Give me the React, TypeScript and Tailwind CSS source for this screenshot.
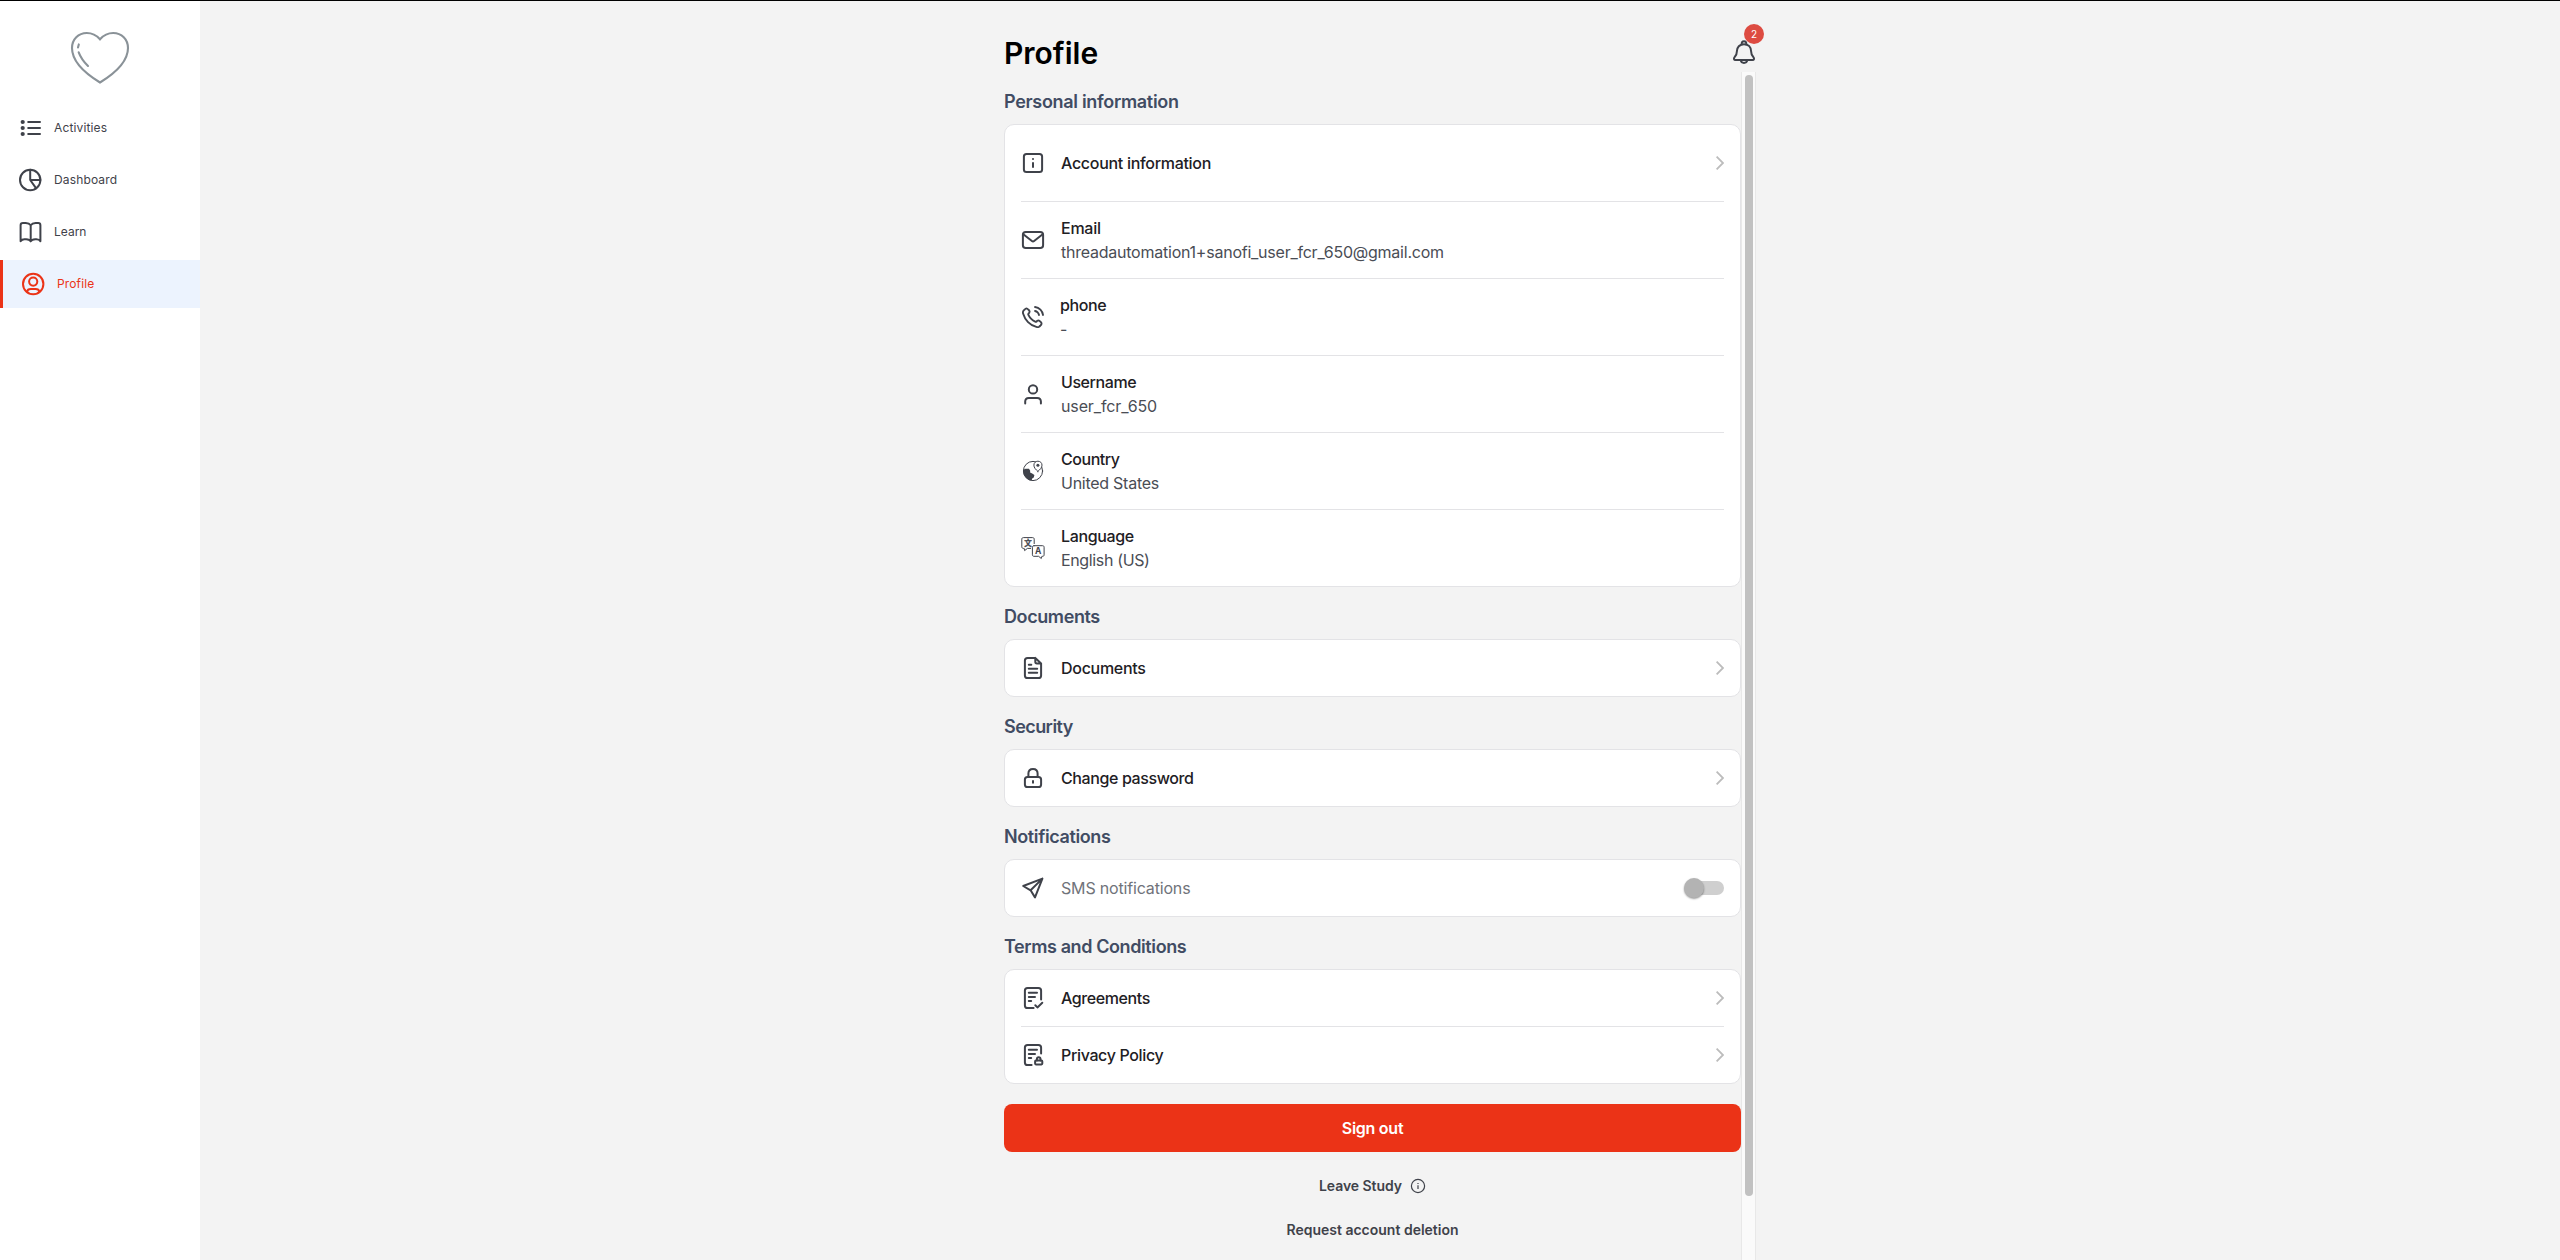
import React from 'react';

type IconProps = { children: React.ReactNode; width?: number };

function Icon({ children, width = 2 }: IconProps) {
  return (
    <svg
      viewBox="0 0 24 24"
      className="size-6 shrink-0"
      fill="none"
      stroke="currentColor"
      strokeWidth={width}
      strokeLinecap="round"
      strokeLinejoin="round"
    >
      {children}
    </svg>
  );
}

const ListIcon = () => (
  <Icon>
    <path d="M10.2 6H22M10.2 12H22M10.2 18H22" />
    <g fill="currentColor" stroke="none">
      <circle cx="4.7" cy="6" r="2.1" />
      <circle cx="4.7" cy="12" r="2.1" />
      <circle cx="4.7" cy="18" r="2.1" />
    </g>
  </Icon>
);

const PieIcon = () => (
  <Icon>
    <circle cx="12.2" cy="12" r="10.2" />
    <path d="M12.2 1.8V12L18 20.2M12.2 12H22.4" />
  </Icon>
);

const BookIcon = () => (
  <Icon>
    <path d="M12.7 5.2C11.6 3.6 10 3 7.8 3H5C3.4 3 2.6 3.8 2.6 5.2V21.2C3.5 19.8 4.6 19.2 6.4 19.2H8.2C10.4 19.2 11.9 19.8 12.7 21.4C13.5 19.8 15 19.2 17.2 19.2H18.4C20.2 19.2 21.6 19.8 22.4 21.2V5.2C22.4 3.8 21.8 3 20.2 3H17.6C15.4 3 13.8 3.6 12.7 5.2V21.2" />
  </Icon>
);

const AvatarIcon = () => (
  <Icon>
    <circle cx="12.2" cy="12" r="10.2" />
    <circle cx="12.2" cy="9.6" r="4.1" />
    <path d="M6 19.8C6.4 17.9 7.7 17.1 9.8 17.1H14.6C16.7 17.1 18 17.9 18.4 19.8" />
  </Icon>
);

const InfoSquareIcon = () => (
  <Icon>
    <rect x="2.9" y="2.9" width="18.2" height="18.2" rx="2.6" />
    <path d="M12 11.2V16.8M12 7.2V8.8" strokeLinecap="butt" />
  </Icon>
);

const MailIcon = () => (
  <Icon>
    <rect x="1.9" y="3.9" width="20.2" height="16.2" rx="2.8" />
    <path d="M2.3 6.2L10.9 13C11.6 13.6 12.4 13.6 13.1 13L21.7 6.2" />
  </Icon>
);

const PhoneIcon = () => (
  <Icon width={1.9}>
    <path d="M14.05 6C15.03 6.19 15.92 6.67 16.63 7.37C17.33 8.08 17.81 8.97 18 9.95M14.05 2C16.08 2.23 17.97 3.13 19.42 4.58C20.86 6.02 21.77 7.91 22 9.94M10.23 13.86C9.03 12.66 8.08 11.3 7.38 9.85C7.32 9.73 7.29 9.67 7.27 9.59C7.19 9.31 7.24 8.96 7.41 8.73C7.46 8.66 7.52 8.6 7.63 8.49C7.98 8.14 8.16 7.96 8.27 7.79C8.7 7.12 8.7 6.27 8.27 5.61C8.16 5.43 7.98 5.26 7.63 4.91L7.44 4.71C6.91 4.18 6.64 3.91 6.36 3.77C5.79 3.48 5.12 3.48 4.55 3.77C4.27 3.91 4 4.18 3.47 4.71L3.31 4.87C2.78 5.4 2.52 5.66 2.31 6.02C2.09 6.42 1.93 7.04 1.93 7.5C1.93 7.91 2.01 8.2 2.17 8.76C3.03 11.79 4.66 14.66 7.04 17.05C9.43 19.43 12.3 21.06 15.33 21.92C15.89 22.08 16.18 22.16 16.59 22.16C17.05 22.16 17.67 22 18.07 21.78C18.43 21.57 18.69 21.31 19.22 20.78L19.38 20.62C19.91 20.09 20.18 19.82 20.32 19.54C20.61 18.97 20.61 18.3 20.32 17.73C20.18 17.45 19.91 17.18 19.38 16.65L19.18 16.46C18.83 16.11 18.66 15.93 18.48 15.82C17.82 15.39 16.97 15.39 16.3 15.82C16.13 15.93 15.95 16.11 15.6 16.46C15.49 16.57 15.43 16.63 15.36 16.68C15.13 16.85 14.78 16.9 14.5 16.82C14.42 16.8 14.36 16.77 14.24 16.71C12.79 16.01 11.43 15.06 10.23 13.86Z" />
  </Icon>
);

const UserIcon = () => (
  <Icon>
    <circle cx="12" cy="7.4" r="4.2" />
    <path d="M4.2 21.6V19.6C4.2 17.4 5.6 15.9 7.8 15.9H16.2C18.4 15.9 19.9 17.4 19.9 19.6V21.6" />
  </Icon>
);

const GlobePinIcon = () => (
  <Icon width={1}>
    <circle cx="12" cy="12" r="9.6" />
    <path
      d="M2.2 10.7L4.6 9.7L8 9.8L9.2 11.8L9.1 13.4L11.2 14.4L13.4 16L12.8 18.4L11.2 19.6L10.6 21.6C5.5 20.8 1.8 16.2 2.2 10.7Z"
      fill="currentColor"
      stroke="none"
    />
    <path
      d="M16.9 12.4C14.6 10.4 12.9 8.7 12.9 6.1C12.9 3.8 14.7 2.2 16.9 2.2C19.2 2.2 21 3.8 21 6.1C21 8.7 19.2 10.4 16.9 12.4Z"
      fill="white"
    />
    <circle cx="16.9" cy="6.2" r="1.5" fill="currentColor" stroke="none" />
  </Icon>
);

const LanguageIcon = () => (
  <Icon width={1}>
    <path d="M9.6 12.4H6.4L3.6 14.6L3.2 12.4H2.4C1.4 12.4 .8 11.8 .8 10.8V3.2C.8 2.2 1.4 1.6 2.4 1.6H11.6C12.6 1.6 13.2 2.2 13.2 3.2V7.6" />
    <path d="M13 9.7H21.6C22.6 9.7 23.1 10.3 23.1 11.2V18.8C23.1 19.8 22.6 20.3 21.6 20.3H20.9L20.3 22.5L17.6 20.3H13C12 20.3 11.4 19.8 11.4 18.8V11.2C11.4 10.3 12 9.7 13 9.7Z" />
    <text x="7" y="9.8" textAnchor="middle" className="fill-current font-['Noto_Sans_CJK_SC',sans-serif] text-[7.5px] font-bold" stroke="currentColor" strokeWidth=".3">
      文
    </text>
    <text x="17.2" y="17.9" textAnchor="middle" className="fill-current font-[Inter,sans-serif] text-[8.5px] font-bold" stroke="none">
      A
    </text>
  </Icon>
);

const DocumentIcon = () => (
  <Icon>
    <path d="M14.3 1.9H6.6C4.8 1.9 3.9 2.8 3.9 4.6V19.4C3.9 21.2 4.8 22.1 6.6 22.1H17.4C19.2 22.1 20.1 21.2 20.1 19.4V7.4L14.3 1.9V5.8C14.3 6.9 14.8 7.4 15.9 7.4H20.1" />
    <path d="M7.8 8.8H10.3M7.8 12.8H16.2M7.8 16.8H16.2" />
  </Icon>
);

const LockIcon = () => (
  <Icon>
    <rect x="3.9" y="10.9" width="16.2" height="10.2" rx="2.6" />
    <path d="M7.4 10.7V7.6C7.4 4.7 9.2 2.9 12 2.9C14.8 2.9 16.6 4.7 16.6 7.6V10.7" />
    <path d="M12 14.2V17.4" strokeLinecap="butt" />
  </Icon>
);

const SendIcon = () => (
  <Icon>
    <path d="M2.2 10L21.4 2.6L14 21.4L9.6 14.3ZM9.6 14.3L21.4 2.6" />
  </Icon>
);

const AgreementIcon = () => (
  <Icon>
    <path d="M12.6 22.1H6.6C4.8 22.1 3.9 21.2 3.9 19.4V4.6C3.9 2.8 4.8 1.9 6.6 1.9H17.4C19.2 1.9 20.1 2.8 20.1 4.6V13.4" />
    <path d="M7.8 6.8H16M7.8 11H14M7.8 15.1H10.2M14.3 19.3L16.4 21.4L21.3 16.8" />
  </Icon>
);

const PrivacyIcon = () => (
  <Icon>
    <path d="M10.6 22.1H6.6C4.8 22.1 3.9 21.2 3.9 19.4V4.6C3.9 2.8 4.8 1.9 6.6 1.9H17.4C19.2 1.9 20.1 2.8 20.1 4.6V10.4" />
    <path d="M7.8 6.8H16M7.8 11H14M7.8 15.1H10.2" />
    <rect x="14.1" y="17.6" width="7.2" height="3.8" rx=".8" />
    <path d="M15.9 17.4V16.1C15.9 14.9 16.6 14.2 17.7 14.2C18.8 14.2 19.5 14.9 19.5 16.1V17.4" />
  </Icon>
);

const BellIcon = () => (
  <Icon>
    <path d="M12 4.2C7.6 4.2 4.9 7.3 4.9 11.3C4.9 14.6 4.1 15.8 2.5 17.3C1.5 18.5 1.9 20 3.5 20H20.5C22.1 20 22.5 18.5 21.5 17.3C19.9 15.8 19.1 14.6 19.1 11.3C19.1 7.3 16.4 4.2 12 4.2Z" />
    <path d="M9.9 4.3C9.3 2.6 10.3 1.2 12 1.2C13.7 1.2 14.7 2.6 14.1 4.3" />
    <path d="M8.7 20.2C9 22 10.2 22.9 12 22.9C13.8 22.9 15 22 15.3 20.2" />
  </Icon>
);

const Chevron = () => (
  <svg viewBox="0 0 8 14" className="h-3.5 w-2 shrink-0 text-[#bcbcbc]" fill="none" stroke="currentColor" strokeWidth="1.8">
    <path d="M.6 .6L7 7L.6 13.4" />
  </svg>
);

const HeartLogo = () => (
  <svg viewBox="0 0 60 54" className="h-[54px] w-[60px]" fill="none" stroke="#8a9298" strokeWidth="2.1" strokeLinecap="round">
    <path d="M30 8.3C26.4 4.2 21.6 2 16.8 2C8.4 2 2 8.2 2 17C2 31 15 42.3 30 51.5C45 42.3 58 31 58 17C58 8.2 51.6 2 43.2 2C38.4 2 33.6 4.2 30 8.3Z" />
    <path d="M8.8 13.4L8 16.4M8.7 21.3C10.6 26.4 13.6 30.6 18 35" />
  </svg>
);

const navItems = [
  { label: 'Activities', icon: <ListIcon />, tracking: 'tracking-[0.14px]' },
  { label: 'Dashboard', icon: <PieIcon />, tracking: 'tracking-[0.14px]' },
  { label: 'Learn', icon: <BookIcon />, tracking: 'tracking-[0px]' },
  { label: 'Profile', icon: <AvatarIcon />, tracking: 'tracking-[0.14px]', active: true },
];

type RowProps = {
  icon: React.ReactNode;
  label: string;
  labelClass: string;
  value?: string;
  valueClass?: string;
  tall?: boolean;
  end?: React.ReactNode;
};

function Row({ icon, label, labelClass, value, valueClass = '', tall, end }: RowProps) {
  return (
    <div className={`box-content flex items-center gap-4 ${tall ? 'h-[76px]' : 'h-14'}`}>
      {icon}
      <div className="flex grow flex-col">
        <span className={`leading-6 ${labelClass}`}>{label}</span>
        {value && <span className={`leading-6 text-[#4a4d55] ${valueClass}`}>{value}</span>}
      </div>
      {end}
    </div>
  );
}

type SectionProps = { title: string; titleClass: string; children: React.ReactNode };

function Section({ title, titleClass, children }: SectionProps) {
  return (
    <section className="pt-4">
      <h2 className={`mb-2 text-lg leading-7 font-semibold text-[#414c63] ${titleClass}`}>{title}</h2>
      <div className="divide-y divide-[#e3e3e6] rounded-[10px] border border-[#e3e3e6] bg-white px-4">{children}</div>
    </section>
  );
}

const strong = 'font-medium text-[#1e2024]';

const Toggle = () => (
  <span className="relative flex h-3.5 w-[34px] rounded-full bg-[#cfcfcf]">
    <span className="absolute -top-[3px] -left-1.5 size-5 rounded-full bg-[#b3b3b3] shadow-[0_1px_2px_rgba(0,0,0,0.4)]" />
  </span>
);

export default function App() {
  return (
    <div className="flex h-[1260px] w-[2560px] overflow-hidden border-t border-black bg-[#f3f3f3] font-[Inter,sans-serif] text-base text-[#3f424a]">
      <aside className="flex w-[200px] shrink-0 flex-col bg-white">
        <div className="flex h-[103px] justify-center pt-[30px]">
          <HeartLogo />
        </div>
        <nav className="flex flex-col gap-1">
          {navItems.map((item) => (
            <a
              key={item.label}
              className={`flex h-12 items-center gap-3 pl-[18px] text-xs ${item.tracking} ${
                item.active ? 'border-l-[3px] border-[#eb3317] bg-[#ecf3fe] text-[#eb3317]' : ''
              }`}
            >
              {item.icon}
              {item.label}
            </a>
          ))}
        </nav>
      </aside>

      <main className="flex grow justify-center">
        <div className="flex w-[752px] flex-col">
          <header className="flex h-[71px] shrink-0 items-end justify-between pb-2">
            <h1 className="-mb-px text-[30px] leading-6 font-semibold text-black">Profile</h1>
            <div className="relative">
              <BellIcon />
              <span className="absolute -top-4 left-3 flex size-5 items-center justify-center rounded-full bg-[#dd4b41] text-[10px] text-white">
                2
              </span>
            </div>
          </header>

          <div className="flex min-h-0 grow">
            <div className="flex w-[737px] shrink-0 flex-col">
              <Section title="Personal information" titleClass="tracking-[-0.31px]">
                <Row tall icon={<InfoSquareIcon />} label="Account information" labelClass={`${strong} tracking-[-0.3px]`} end={<Chevron />} />
                <Row
                  tall
                  icon={<MailIcon />}
                  label="Email"
                  labelClass={`${strong} tracking-[-0.25px]`}
                  value="threadautomation1+sanofi_user_fcr_650@gmail.com"
                  valueClass="tracking-[-0.236px]"
                />
                <Row
                  tall
                  icon={<PhoneIcon />}
                  label="phone"
                  labelClass={`${strong} -ml-px tracking-[-0.37px]`}
                  value="-"
                  valueClass="-ml-px"
                />
                <Row
                  tall
                  icon={<UserIcon />}
                  label="Username"
                  labelClass={`${strong} tracking-[-0.43px]`}
                  value="user_fcr_650"
                  valueClass="tracking-[-0.12px]"
                />
                <Row
                  tall
                  icon={<GlobePinIcon />}
                  label="Country"
                  labelClass={`${strong} tracking-[-0.45px]`}
                  value="United States"
                  valueClass="tracking-[-0.26px]"
                />
                <Row
                  tall
                  icon={<LanguageIcon />}
                  label="Language"
                  labelClass={`${strong} tracking-[-0.37px]`}
                  value="English (US)"
                  valueClass="tracking-[-0.36px]"
                />
              </Section>

              <Section title="Documents" titleClass="tracking-[-0.4px]">
                <Row icon={<DocumentIcon />} label="Documents" labelClass={`${strong} tracking-[-0.29px]`} end={<Chevron />} />
              </Section>

              <Section title="Security" titleClass="tracking-[-0.56px]">
                <Row icon={<LockIcon />} label="Change password" labelClass={`${strong} tracking-[-0.39px]`} end={<Chevron />} />
              </Section>

              <Section title="Notifications" titleClass="tracking-[-0.38px]">
                <Row icon={<SendIcon />} label="SMS notifications" labelClass="text-[#70737a] tracking-[-0.17px]" end={<Toggle />} />
              </Section>

              <Section title="Terms and Conditions" titleClass="tracking-[-0.4px]">
                <Row icon={<AgreementIcon />} label="Agreements" labelClass={`${strong} tracking-[-0.4px]`} end={<Chevron />} />
                <Row icon={<PrivacyIcon />} label="Privacy Policy" labelClass={`${strong} tracking-[-0.35px]`} end={<Chevron />} />
              </Section>

              <button className="mt-5 h-12 shrink-0 rounded-lg bg-[#eb3317] font-semibold tracking-[-0.26px] text-white">Sign out</button>

              <div className="mt-[22px] flex h-6 items-center justify-center gap-2 text-sm font-semibold tracking-[-0.06px]">
                Leave Study
                <svg viewBox="0 0 16 16" className="size-4" fill="none" stroke="currentColor" strokeWidth="1.2">
                  <circle cx="8" cy="8" r="6.6" />
                  <path d="M8 7.3V11M8 4.9V6.1" />
                </svg>
              </div>
              <div className="mt-5 flex h-6 items-center justify-center text-sm font-semibold">Request account deletion</div>
            </div>

            <div className="w-[15px] shrink-0 border-x border-[#e8e8e8] bg-[#fafafa] px-[3px] pt-[3px]">
              <div className="h-[1121px] w-2 rounded-full bg-[#c1c1c1]" />
            </div>
          </div>
        </div>
      </main>
    </div>
  );
}
